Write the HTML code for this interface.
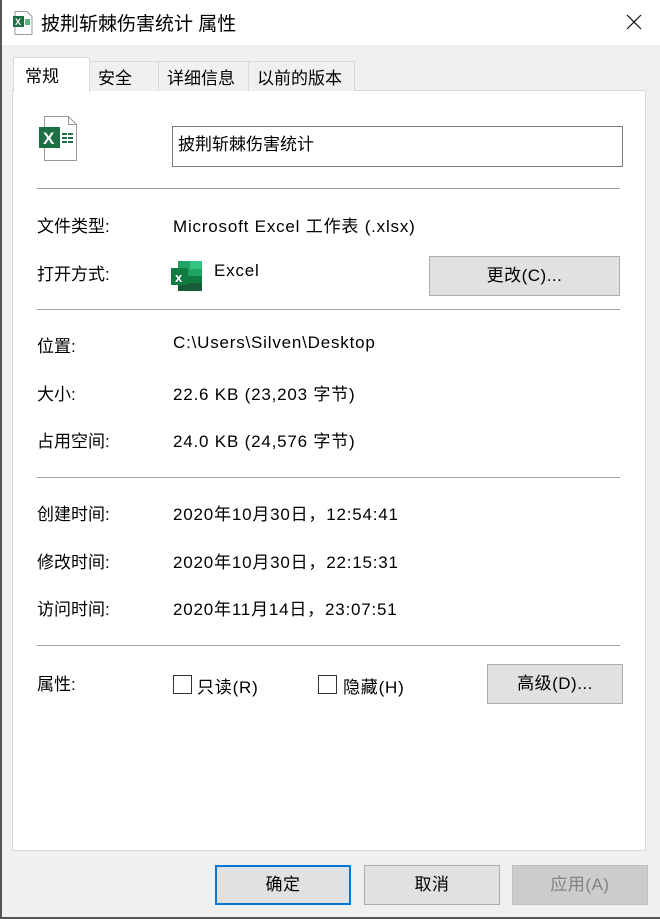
<!DOCTYPE html>
<html><head><meta charset="utf-8"><style>
*{margin:0;padding:0;box-sizing:border-box}
body{width:660px;height:919px;background:#f0f0f0;position:relative;overflow:hidden;font-family:"Liberation Sans","Noto Sans CJK SC",sans-serif;font-size:17px;color:#000}
.a{position:absolute;white-space:nowrap}
.v{letter-spacing:0.8px}
.title{left:0;top:0;width:660px;height:45px;background:#fff}
.panel{left:12px;top:90px;width:634px;height:761px;background:#fff;border:1px solid #d9d9d9}
.tab{position:absolute;top:61px;height:30px;background:#f0f0f0;border:1px solid #d9d9d9;border-bottom:none;padding:2px 0 0 8px;font-size:17px}
.sep{position:absolute;left:37px;width:583px;height:1px;background:#a0a0a0}
.btn{position:absolute;background:#e1e1e1;border:1px solid #adadad;text-align:center;font-size:17px;letter-spacing:0.5px}
.cb{position:absolute;width:19px;height:19px;border:1px solid #333;background:#fff}
</style></head><body>
<div class="a" style="left:0;top:0;width:2px;height:919px;background:#555;z-index:5"></div>
<div class="a" style="left:0;top:917px;width:660px;height:2px;background:#555;z-index:5"></div>
<div class="a title"></div>
<svg class="a" style="left:12px;top:11px" width="22" height="24" viewBox="0 0 22 24"><path d="M3 .5h12l5 5v18H3z" fill="#fff" stroke="#999"/><rect x="1" y="5" width="11" height="11" fill="#1d7044"/><text x="3" y="14" font-size="9" font-weight="bold" fill="#fff" font-family="Liberation Sans">X</text><rect x="13" y="8" width="5" height="6" fill="#5cb87a"/></svg>
<div class="a" style="left:41px;top:9px;font-size:19px">披荆斩棘伤害统计 属性</div>
<svg class="a" style="left:626px;top:14px" width="16" height="16" viewBox="0 0 16 16"><path d="M1 1L15 15M15 1L1 15" stroke="#111" stroke-width="1.2"/></svg>
<div class="a panel"></div>
<div class="tab" style="left:89px;width:70px">安全</div>
<div class="tab" style="left:158px;width:91px">详细信息</div>
<div class="tab" style="left:248px;width:107px">以前的版本</div>
<div class="tab" style="left:13px;top:57px;height:35px;width:77px;background:#fff;z-index:2;padding-left:11px;padding-top:4px">常规</div>
<svg class="a" style="left:38px;top:116px" width="42" height="45" viewBox="0 0 42 45"><path d="M6.5 .5h24l8 8v36h-32z" fill="#fff" stroke="#999"/><path d="M30.5.5v8h8" fill="none" stroke="#999"/><rect x="1" y="11" width="21" height="21" fill="#1d7044"/><text x="5" y="28" font-size="17" font-weight="bold" fill="#fff" font-family="Liberation Sans">X</text><g fill="#1d7044"><rect x="24" y="17" width="5" height="2"/><rect x="30" y="17" width="5" height="2"/><rect x="24" y="21" width="5" height="2"/><rect x="30" y="21" width="5" height="2"/><rect x="24" y="25" width="5" height="2"/><rect x="30" y="25" width="5" height="2"/></g></svg>
<div class="a" style="left:172px;top:126px;width:451px;height:41px;border:1px solid #7a7a7a;padding:3px 0 0 5px">披荆斩棘伤害统计</div>
<div class="sep" style="top:188px"></div>
<div class="a" style="left:37px;top:212px">文件类型:</div>
<div class="a v" style="left:173px;top:212px">Microsoft Excel 工作表 (.xlsx)</div>
<div class="a" style="left:37px;top:260px">打开方式:</div>
<svg class="a" style="left:171px;top:261px" width="32" height="30" viewBox="0 0 32 30"><rect x="7" y="0" width="24" height="30" fill="#21a366"/><rect x="19" y="0" width="12" height="8" fill="#33c481"/><rect x="7" y="15" width="24" height="8" fill="#107c41"/><rect x="7" y="22" width="24" height="8" fill="#185c37"/><rect x="0" y="7" width="17" height="17" fill="#107c41"/><text x="4" y="21" font-size="13" font-weight="bold" fill="#fff" font-family="Liberation Sans">x</text></svg>
<div class="a v" style="left:214px;top:261px">Excel</div>
<div class="btn" style="left:429px;top:256px;width:191px;height:40px;line-height:38px">更改(C)...</div>
<div class="sep" style="top:309px"></div>
<div class="a" style="left:37px;top:332px">位置:</div>
<div class="a v" style="left:173px;top:333px">C:\Users\Silven\Desktop</div>
<div class="a" style="left:37px;top:380px">大小:</div>
<div class="a v" style="left:173px;top:380px">22.6 KB (23,203 字节)</div>
<div class="a" style="left:37px;top:427px">占用空间:</div>
<div class="a v" style="left:173px;top:427px">24.0 KB (24,576 字节)</div>
<div class="sep" style="top:477px"></div>
<div class="a" style="left:37px;top:500px">创建时间:</div>
<div class="a v" style="left:173px;top:500px">2020年10月30日，12:54:41</div>
<div class="a" style="left:37px;top:548px">修改时间:</div>
<div class="a v" style="left:173px;top:548px">2020年10月30日，22:15:31</div>
<div class="a" style="left:37px;top:595px">访问时间:</div>
<div class="a v" style="left:173px;top:595px">2020年11月14日，23:07:51</div>
<div class="sep" style="top:645px"></div>
<div class="a" style="left:37px;top:670px">属性:</div>
<div class="cb" style="left:173px;top:675px"></div>
<div class="a v" style="left:197px;top:673px">只读(R)</div>
<div class="cb" style="left:318px;top:675px"></div>
<div class="a v" style="left:343px;top:673px">隐藏(H)</div>
<div class="btn" style="left:487px;top:664px;width:136px;height:40px;line-height:38px">高级(D)...</div>
<div class="btn" style="left:215px;top:865px;width:136px;height:40px;line-height:36px;border:2px solid #0078d7">确定</div>
<div class="btn" style="left:364px;top:865px;width:136px;height:40px;line-height:38px">取消</div>
<div class="btn" style="left:512px;top:865px;width:136px;height:40px;line-height:38px;background:#cccccc;border-color:#bfbfbf;color:#838383">应用(A)</div>
</body></html>
